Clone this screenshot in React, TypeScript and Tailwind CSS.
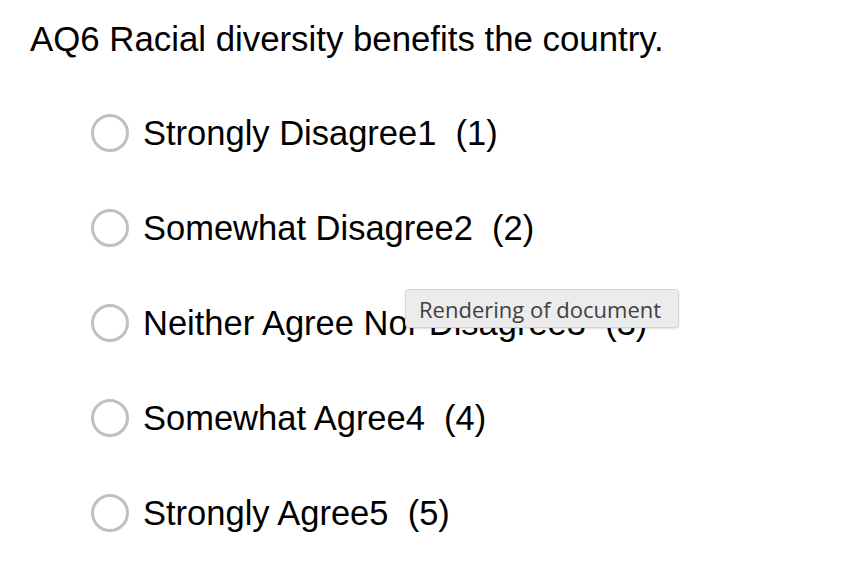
const options = [
  'Strongly Disagree1',
  'Somewhat Disagree2',
  'Neither Agree Nor Disagree3',
  'Somewhat Agree4',
  'Strongly Agree5',
];

export default function App() {
  return (
    <div className="relative w-[868px] h-[574px] bg-white text-black font-['Liberation_Sans',Arial,sans-serif]">
      {/* Question */}
      <h1 className="pl-[30px] pt-[19px] text-[34.8px] leading-[40px]">
        AQ6 Racial diversity benefits the country.
      </h1>

      {/* Choices */}
      <div className="flex flex-col gap-[57px] pl-[91px] mt-[55px]">
        {options.map((label, i) => (
          <label key={label} className="flex items-center gap-[14px] h-[38px]">
            <span className="w-[38px] h-[38px] rounded-full border-[3.5px] border-[#c0c0c0] bg-white shrink-0" />
            <span className="text-[34.5px] leading-[38px] whitespace-pre">
              {label}  ({i + 1})
            </span>
          </label>
        ))}
      </div>

      {/* Tooltip */}
      <div className="absolute left-[405px] top-[289px] w-[274px] h-[39px] bg-[#ececec] border border-[#d6d6d6] rounded-[4px] shadow-[0_1px_2px_rgba(0,0,0,0.12)] flex items-center pl-[13px] pt-[1px] text-[22px] text-[#404040] font-['Open_Sans',sans-serif]">
        Rendering of document
      </div>
    </div>
  );
}
